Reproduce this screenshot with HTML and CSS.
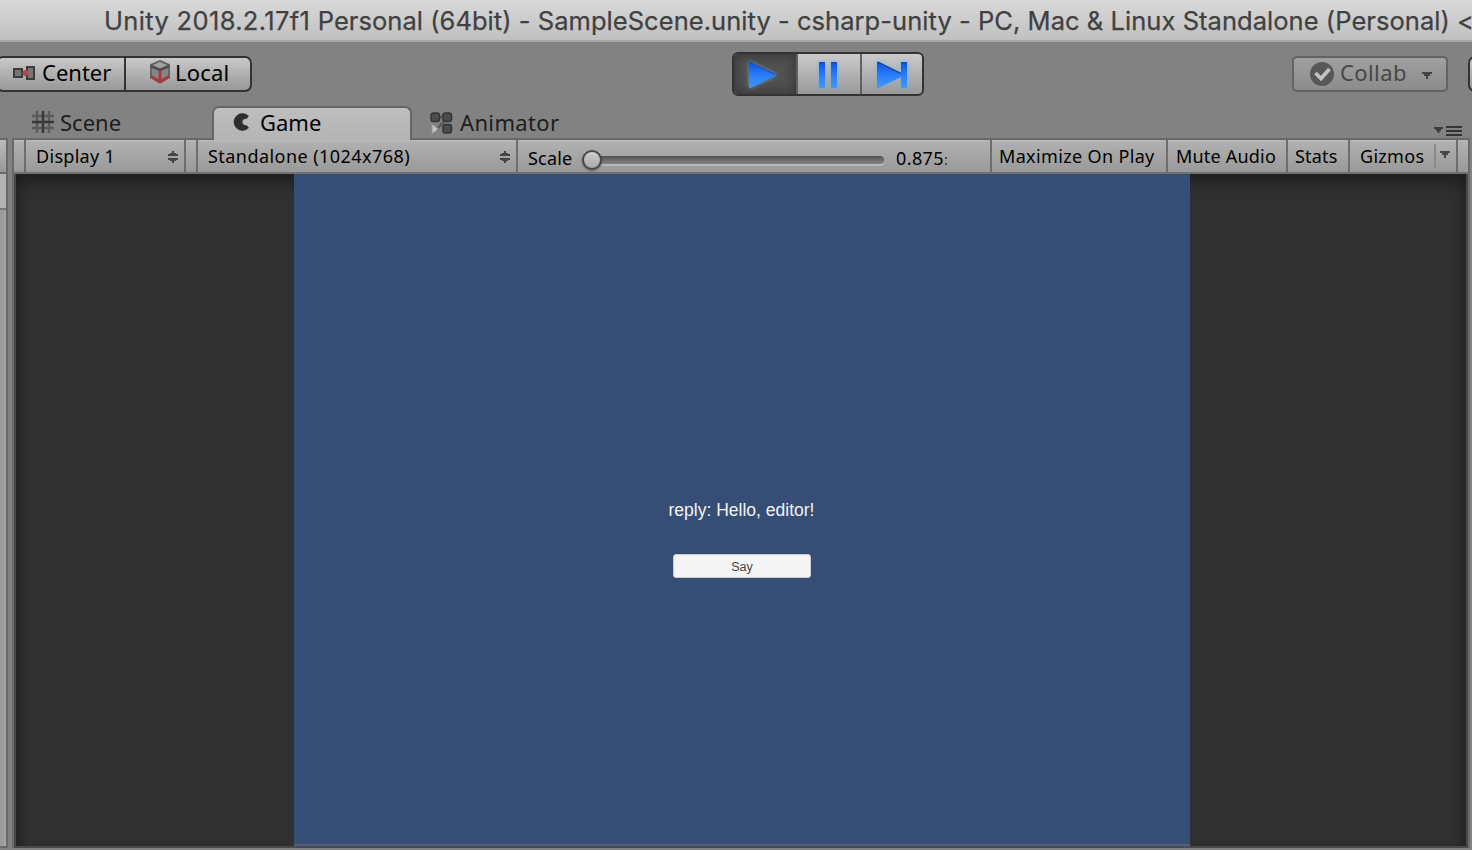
FILE: index.html
```
<!DOCTYPE html>
<html lang="en">
<head>
<meta charset="utf-8">
<title>Unity 2018.2.17f1 Personal</title>
<link rel="stylesheet" href="styles.css">
</head>
<body>
<header class="titlebar"><span class="title"><span class="version">Unity 2018.2.17f1 </span>Personal (64bit) - SampleScene.unity - csharp-unity - PC, Mac &amp; Linux Standalone (Personal) &lt;</span></header>
<div class="toolbar">
  <div class="pivot-group">
    <div class="pivot center">
      <svg width="24" height="18" viewBox="0 0 24 18"><rect x="1" y="5" width="8" height="8" fill="#777" stroke="#3c3c3c" stroke-width="2"/><path d="M14 3h7v12h-7z" fill="#777" stroke="#3c3c3c" stroke-width="2"/><path d="M9 9h4" stroke="#444" stroke-width="2"/><circle cx="12.500" cy="9" r="3" fill="#b5474c"/></svg>
      <span class="t-center">Center</span>
    </div>
    <div class="pivot local">
      <svg width="22" height="26" viewBox="0 0 22 26"><path d="M11 2 20 6V18.500L11 23.500 2 18.500V6z" fill="#858585" stroke="#636363" stroke-width="2"/><path d="M3 6.500 11 10l8-3.500L11 3z" fill="#a0a0a0"/><path d="M2 7 11 11l9-4" fill="none" stroke="#4c4c4c" stroke-width="2.500"/><path d="M11 11.500v11M2 17.500 11 22.500 20 17.500" fill="none" stroke="#a83a42" stroke-width="3"/></svg>
      <span class="t-local">Local</span>
    </div>
  </div>
  <div class="play-group">
    <div class="play on"><svg width="60" height="40" viewBox="0 0 60 40"><defs><linearGradient id="blue" gradientUnits="userSpaceOnUse" x1="0" y1="7" x2="0" y2="34"><stop offset="0" stop-color="#123a9c"/><stop offset=".12" stop-color="#1458e8"/><stop offset=".55" stop-color="#2b80fa"/><stop offset="1" stop-color="#3f98fa"/></linearGradient></defs><path d="M15 7.500 43 21 15 34.500z" fill="url(#blue)"/><path d="M15 8 41 20.500" stroke="#1c4fa8"/></svg></div>
    <div class="play"><svg width="60" height="40" viewBox="0 0 60 40"><path d="M21 8h6v26h-6zM33 8h6v26h-6z" fill="url(#blue)"/></svg></div>
    <div class="play"><svg width="60" height="40" viewBox="0 0 60 40"><path d="M15 7.500 39 19V8h6v26h-6V23L15 34.500z" fill="url(#blue)"/><path d="M16 8 39 19.500" stroke="#18418c" stroke-width="1.200"/></svg></div>
  </div>
  <div class="collab">
    <svg width="24" height="24" viewBox="0 0 24 24"><circle cx="12" cy="12" r="12" fill="#585858"/><path d="M5.500 11 11 16.500 19.500 7" fill="none" stroke="#c2c2c2" stroke-width="3.800"/></svg>
    <span class="t-collab">Collab</span>
    <svg class="drop" width="10" height="7" viewBox="0 0 10 7"><path d="M0 0h10v2H8v2H6v3H4V4H2V2H0z" fill="#444"/></svg>
  </div>
  <div class="edge-button"></div>
</div>
<nav class="tabs">
  <div class="tab scene"><svg width="22" height="22" viewBox="0 0 22 22"><path d="M0 5h22M0 17h22M5 0v22M17 0v22" stroke="#5c5c5c" stroke-width="2.500"/><path d="M0 11h22M11 0v22" stroke="#383838" stroke-width="2.500"/></svg><span class="t-scene">Scene</span></div>
  <div class="tab game"><svg width="17" height="18" viewBox="0 0 17 18"><path d="M15.500 3A8.500 8.500 0 1 0 15.500 15L14 12.800 10.500 12Q7.500 9 10.500 6L14 5.200z" fill="#2e2e2e" stroke="#2e2e2e" stroke-width=".6"/></svg><span class="t-game">Game</span></div>
  <div class="tab animator"><svg width="23" height="23" viewBox="0 0 23 23"><path d="M6 5h12M17 6 8 16" stroke="#595959" stroke-width="2.500"/><g fill="#4d4d4d" stroke="#353535" stroke-width="1.500"><rect x="1" y="1" width="8.500" height="8.500" rx="2.500"/><rect x="13" y="1" width="8.500" height="8.500" rx="2.500"/><rect x="13" y="12.500" width="8.500" height="8.500" rx="2.500"/></g><path d="M2 12v10l6-5z" fill="#c8c8c8" stroke="#929292"/></svg><span class="t-anim">Animator</span></div>
  <svg class="pane-menu" width="28" height="12" viewBox="0 0 28 12"><path d="M0 2h9v2H7v2H5.500v2H3.500V6H2V4H0z" fill="#3c3c3c"/><path d="M12 2h16M12 6h16M12 10h16" stroke="#333" stroke-width="2"/></svg>
</nav>
<div class="workspace">
  <aside class="side"><div class="side-bar"></div><div class="side-head"></div><div class="side-body"></div></aside>
  <main class="panel">
    <div class="options">
      <div class="cell lead"></div>
      <div class="cell display"><span class="t-display">Display 1</span><svg class="spin" width="10" height="14" viewBox="0 0 10 14"><path d="M4 1h2v2h2v1h2v2H0V4h2V3h2zM0 8h10v2H8v1H6v2H4v-2H2v-1H0z" fill="#444"/></svg></div>
      <div class="cell gap"></div>
      <div class="cell aspect"><span class="t-aspect">Standalone (1024x768)</span><svg class="spin" width="10" height="14" viewBox="0 0 10 14"><path d="M4 1h2v2h2v1h2v2H0V4h2V3h2zM0 8h10v2H8v1H6v2H4v-2H2v-1H0z" fill="#444"/></svg></div>
      <div class="cell scale"><span class="t-scale">Scale</span><div class="slider"><div class="knob"></div></div><span class="value">0.875<span class="clipped">:</span></span></div>
      <div class="cell maximize"><span class="t-max">Maximize On Play</span></div>
      <div class="cell mute"><span class="t-mute">Mute Audio</span></div>
      <div class="cell stats"><span class="t-stats">Stats</span></div>
      <div class="cell gizmos"><span class="t-giz">Gizmos</span><i class="rule"></i><svg width="10" height="7" viewBox="0 0 10 7"><path d="M0 0h10v2H8v2H6v3H4V4H2V2H0z" fill="#484848"/></svg></div>
    </div>
    <div class="viewport">
      <div class="game-view"><p class="reply">reply: Hello, editor!</p><button class="say">Say</button></div>
    </div>
  </main>
</div>
</body>
</html>
```
FILE: styles.css
```
* { box-sizing: border-box; }
body { margin: 0; width: 1472px; height: 850px; overflow: hidden; background: #828282; display: flex; flex-direction: column; font-family: "Noto Sans", sans-serif; color: #000; white-space: nowrap; }
svg { display: block; flex: none; }
.titlebar { height: 42px; flex: none; padding-left: 104px; background: linear-gradient(#d9d9d9, #c0c0c0); border-bottom: 2px solid #a8a8a8; overflow: hidden; }
.title { display: block; font: 25.500px/42px Inter, sans-serif; color: #414141; letter-spacing: .045px; -webkit-text-stroke: .25px #414141; }
.version { letter-spacing: .34px; }

.toolbar { height: 64px; flex: none; display: flex; align-items: flex-start; overflow: hidden; font-size: 22px; }
.pivot-group { display: flex; flex: none; width: 256px; height: 36px; margin: 14px 0 0 -4px; border: 2px solid #333; border-radius: 7px; background: linear-gradient(#c9c9c9, #989898); }
.pivot { display: flex; align-items: center; line-height: 30px; }
.pivot span { padding-bottom: 5px; }
.center { width: 128px; padding-left: 15px; border-right: 2px solid #333; }
.center svg { margin-top: -2px; }
.center span { margin-left: 5px; }
.local { padding-left: 23px; }
.local svg { margin-top: -4px; }
.local span { margin-left: 4px; letter-spacing: .2px; }
.play-group { display: flex; flex: none; width: 192px; height: 44px; margin: 10px 0 0 480px; border: 2px solid #333; border-radius: 6px; background: linear-gradient(#cbcbcb, #999); overflow: hidden; }
.play { width: 64px; flex: none; border-right: 2px solid #606060; }
.play:last-child { width: 60px; border: 0; }
.play.on { background: #515151; box-shadow: inset 0 0 10px 3px #3b3b3b; }
.play svg { filter: drop-shadow(0 0 2px rgba(105, 175, 240, .75)); }
.collab { display: flex; flex: none; align-items: center; width: 156px; height: 36px; margin: 14px 0 0 368px; padding-left: 16px; border: 2px solid #636363; border-radius: 5px; background: linear-gradient(#a0a0a0, #8c8c8c); color: #484848; line-height: 30px; }
.collab span { margin-left: 6px; width: 67px; padding-bottom: 5px; letter-spacing: .4px; }
.drop { margin: 2px 0 0 15px; }
.edge-button { flex: none; width: 20px; height: 36px; margin: 14px 0 0 20px; border: 2px solid #333; border-radius: 7px; background: linear-gradient(#c9c9c9, #989898); }

.tabs { height: 34px; flex: none; display: flex; align-items: flex-start; font-size: 22px; color: #1d1d1d; line-height: 32px; }
.tab { display: flex; align-items: center; height: 34px; }
.tab span { padding-bottom: 2px; }
.scene { width: 212px; padding-left: 32px; }
.scene svg { margin-top: -2px; }
.scene span { margin-left: 6px; }
.game { width: 200px; padding-left: 19px; border: 2px solid #666; border-bottom: 0; border-radius: 7px 7px 0 0; background: linear-gradient(#bebebe, #b4b4b4); color: #000; position: relative; z-index: 1; }
.game svg { margin-top: -5px; }
.game span { margin-left: 10px; padding-bottom: 4px; }
.animator { padding-left: 18px; }
.animator span { margin-left: 7px; letter-spacing: .35px; }
.pane-menu { margin: 19px 10px 0 auto; }

.workspace { flex: 1; display: flex; gap: 4px; height: 710px; margin-top: -2px; }
.side { width: 8px; height: 710px; display: flex; flex-direction: column; border: solid #696969; border-width: 2px 2px 2px 0; background: #9b9b9b; }
.side-bar { height: 34px; background: linear-gradient(#bcbcbc, #989898); border-bottom: 2px solid #6c6c6c; }
.side-head { height: 36px; background: #b3b3b3; border-bottom: 2px solid #777; }
.side-body { flex: 1; border-right: 2px solid #a4a4a4; }
.panel { width: 1458px; height: 710px; display: flex; flex-direction: column; border: 2px solid #696969; }
.options { height: 34px; flex: none; display: flex; background: linear-gradient(#bbb 0, #b0b0b0 8%, #999 100%); border-bottom: 2px solid #707070; font-size: 18px; line-height: 31px; letter-spacing: .3px; }
.cell { display: flex; align-items: center; flex: none; border-right: 2px solid #6e6e6e; }
.lead { width: 12px; }
.display { width: 160px; padding: 0 6px 0 10px; justify-content: space-between; }
.gap { width: 12px; }
.aspect { width: 320px; padding: 0 6px 0 10px; justify-content: space-between; }
.t-aspect { letter-spacing: .45px; }
.spin { margin-top: 2px; }
.scale { width: 474px; padding-left: 10px; }
.scale > span { padding-top: 5px; }
.t-scale { width: 54px; letter-spacing: .2px; }
.slider { width: 302px; height: 8px; margin-top: 7px; border-radius: 4px; background: linear-gradient(#505050, #858585); box-shadow: 0 2px 0 #b9b9b9; display: flex; align-items: center; }
.knob { width: 20px; height: 20px; border-radius: 50%; border: 2px solid #484848; background: linear-gradient(#d0d0d0, #a5a5a5); box-shadow: 0 1px 2px rgba(0, 0, 0, .4); }
.value { margin-left: 12px; letter-spacing: .4px; }
.clipped { font-size: 14px; color: #333; letter-spacing: 0; }
.maximize { width: 176px; padding-left: 7px; letter-spacing: .35px; }
.mute { width: 120px; padding-left: 8px; letter-spacing: .2px; }
.stats { width: 62px; padding-left: 7px; letter-spacing: .2px; }
.gizmos { width: 108px; padding-left: 10px; }
.gizmos > span { width: 74px; }
.rule { width: 2px; height: 24px; background: #8a8a8a; margin: 0 4px 0 0; }
.gizmos svg { margin-top: -4px; }
.viewport { flex: 1; display: flex; justify-content: center; background: #313131; border: 2px solid #494949; border-top: 0; box-shadow: inset 0 18px 16px -10px #1d1d1d, inset 12px 0 12px -8px #242424, inset -12px 0 12px -8px #242424; }
.game-view { width: 896px; height: 672px; margin-left: 2px; background: #364d75; border-bottom: 2px solid #4d6081; display: flex; flex-direction: column; align-items: center; font-family: "Liberation Sans", Arial, sans-serif; }
.reply { margin: 326px 1px 0 0; color: #f4f4f6; font-size: 17.500px; line-height: 20px; }
.say { width: 138px; height: 24px; margin: 34px 0 0; padding: 2px 0 0; border: 1px solid #ccc; border-radius: 3px; background: #f5f5f5; color: #444; font: 12.500px/20px "Liberation Sans", Arial, sans-serif; }
```
